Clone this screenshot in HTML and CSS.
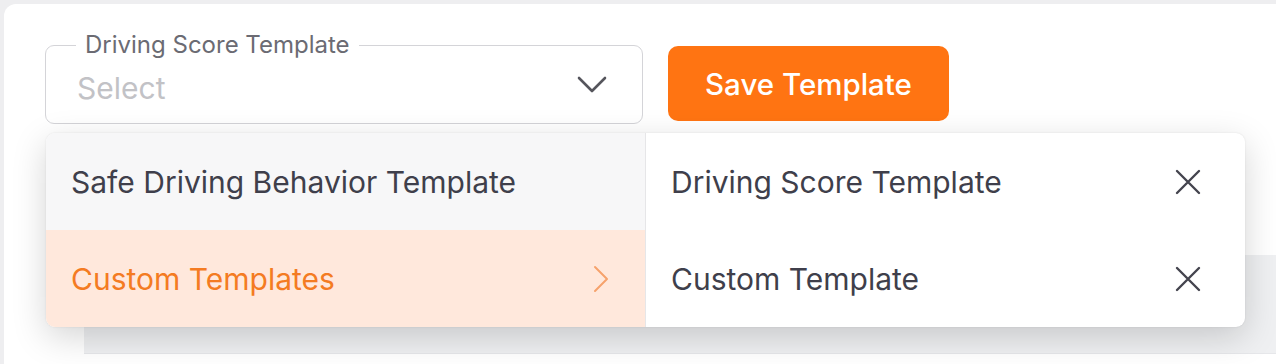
FILE: index.html
```html
<!DOCTYPE html>
<html lang="en">
<head>
<meta charset="utf-8">
<title>Driving Score Template</title>
<link rel="stylesheet" href="styles.css">
</head>
<body>
<div class="card">
  <div class="toolbar">
    <fieldset class="field">
      <legend class="field-label">Driving Score Template</legend>
      <div class="field-row">
        <span class="placeholder">Select</span>
        <svg class="chevron-down" width="30" height="18" viewBox="0 0 30 18" aria-hidden="true"><path d="M2 2 L15 15 L28 2" fill="none" stroke="#55555c" stroke-width="2.6" stroke-linecap="round" stroke-linejoin="round"/></svg>
      </div>
    </fieldset>
    <button class="btn-save" type="button">Save Template</button>
  </div>
  <div class="table-head"></div>
  <div class="menu">
    <ul class="menu-col menu-left">
      <li class="menu-item">Safe Driving Behavior Template</li>
      <li class="menu-item active">
        <span>Custom Templates</span>
        <svg class="chevron-right" width="16" height="28" viewBox="0 0 16 28" aria-hidden="true"><path d="M2 2 L14 14 L2 26" fill="none" stroke="#f6a26c" stroke-width="2" stroke-linecap="round" stroke-linejoin="round"/></svg>
      </li>
    </ul>
    <ul class="menu-col menu-right">
      <li class="menu-item">
        <span>Driving Score Template</span>
        <svg class="close" width="26" height="26" viewBox="0 0 26 26" aria-hidden="true"><path d="M2 2 L24 24 M24 2 L2 24" fill="none" stroke="#44444e" stroke-width="2.4" stroke-linecap="round"/></svg>
      </li>
      <li class="menu-item">
        <span>Custom Template</span>
        <svg class="close" width="26" height="26" viewBox="0 0 26 26" aria-hidden="true"><path d="M2 2 L24 24 M24 2 L2 24" fill="none" stroke="#44444e" stroke-width="2.4" stroke-linecap="round"/></svg>
      </li>
    </ul>
  </div>
</div>
</body>
</html>
```
FILE: styles.css
```css
* { box-sizing: border-box; }
html, body { margin: 0; padding: 0; }
body {
  background: #eeeef0;
  font-family: Inter, "Noto Sans", "Liberation Sans", sans-serif;
  color: #3f3f4b;
  height: 364px;
  overflow: hidden;
}
.card {
  position: relative;
  margin: 4px 0 0 4px;
  background: #ffffff;
  border-radius: 12px 0 0 0;
  height: 360px;
  padding: 27px 0 0 41px;
}
.toolbar {
  display: flex;
  align-items: flex-start;
  gap: 25px;
}
.field {
  width: 598px;
  margin: 0;
  padding: 0 30px 6px 30px;
  border: 1.5px solid #d4d4d8;
  border-radius: 9px;
  min-inline-size: 0;
}
.field-label {
  padding: 0 9px;
  margin-left: 0;
  font-size: 24px;
  line-height: 28px;
  color: #6b6b73;
}
.field-row {
  display: flex;
  align-items: center;
  justify-content: space-between;
  height: 58px;
}
.placeholder {
  font-size: 30px;
  color: #c2c2c6;
  padding-left: 1px;
}
.chevron-down { margin-right: 5px; margin-bottom: 6px; }
.btn-save {
  margin-top: 15px;
  width: 281px;
  height: 75px;
  border: none;
  border-radius: 10px;
  background: #ff7412;
  color: #ffffff;
  font-family: inherit;
  font-size: 29.5px;
  font-weight: 500;
}
.table-head {
  margin: 131px 0 0 39px;
  height: 99px;
  background: #eff0f2;
  border-bottom: 1px solid #e6e7ea;
}
.menu {
  position: absolute;
  left: 42px;
  top: 129px;
  width: 1199px;
  height: 194px;
  display: flex;
  border-radius: 9px;
  background: #ffffff;
  box-shadow: 0 10px 34px rgba(0, 0, 0, 0.17), 0 0 2px rgba(0, 0, 0, 0.1);
  overflow: hidden;
}
.menu-col {
  list-style: none;
  margin: 0;
  padding: 0;
  width: 599px;
  display: flex;
  flex-direction: column;
}
.menu-left {
  background: #f7f7f8;
  border-right: 1px solid #e6e6e8;
  width: 600px;
}
.menu-item {
  height: 97px;
  display: flex;
  align-items: center;
  justify-content: space-between;
  padding: 0 38px 0 25px;
  font-size: 30px;
  color: #3f3f4b;
}
.menu-left .menu-item.active {
  background: #ffe8dc;
  color: #f47b22;
  padding-right: 36px;
}
.menu-right .menu-item { padding-right: 44px; }
```
